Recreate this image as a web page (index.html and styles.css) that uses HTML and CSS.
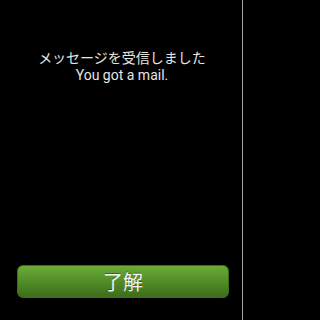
FILE: index.html
```html
<!DOCTYPE html>
<html lang="ja">
<head>
<meta charset="utf-8">
<link rel="stylesheet" href="styles.css">
</head>
<body>
<div class="screen">
  <div class="message">
    <div class="line-ja">メッセージを受信しました</div>
    <div class="line-en">You got a mail.</div>
  </div>
  <div class="spacer"></div>
  <button class="ok">了解</button>
</div>
</body>
</html>
```
FILE: styles.css
```css
html, body {
  margin: 0;
  padding: 0;
  background: #000;
}
.screen {
  width: 242px;
  height: 320px;
  border-right: 1px solid #a3a3a3;
  display: flex;
  flex-direction: column;
  background: #000;
  font-family: Roboto, "Noto Sans CJK JP", sans-serif;
  color: #e6e6e6;
}
.message {
  padding-top: 48px;
  text-align: center;
  font-size: 14px;
  line-height: 18px;
}
.line-ja {
  font-family: "Noto Sans CJK JP", sans-serif;
  margin-left: 2px;
}
.line-en {
  margin-left: 2px;
}
.spacer {
  flex: 1;
}
.ok {
  margin: 0 13px 22px 17px;
  height: 33px;
  border: 1px solid #3f6f1c;
  border-radius: 6px;
  background: linear-gradient(#6caa38, #4f8a26 55%, #3d6c1a);
  color: #f4f4f4;
  font-family: "Noto Sans CJK JP", sans-serif;
  font-size: 20px;
  line-height: 31px;
  padding: 0;
  text-shadow: 0 -1px 0 rgba(0,0,0,0.35);
}
```
